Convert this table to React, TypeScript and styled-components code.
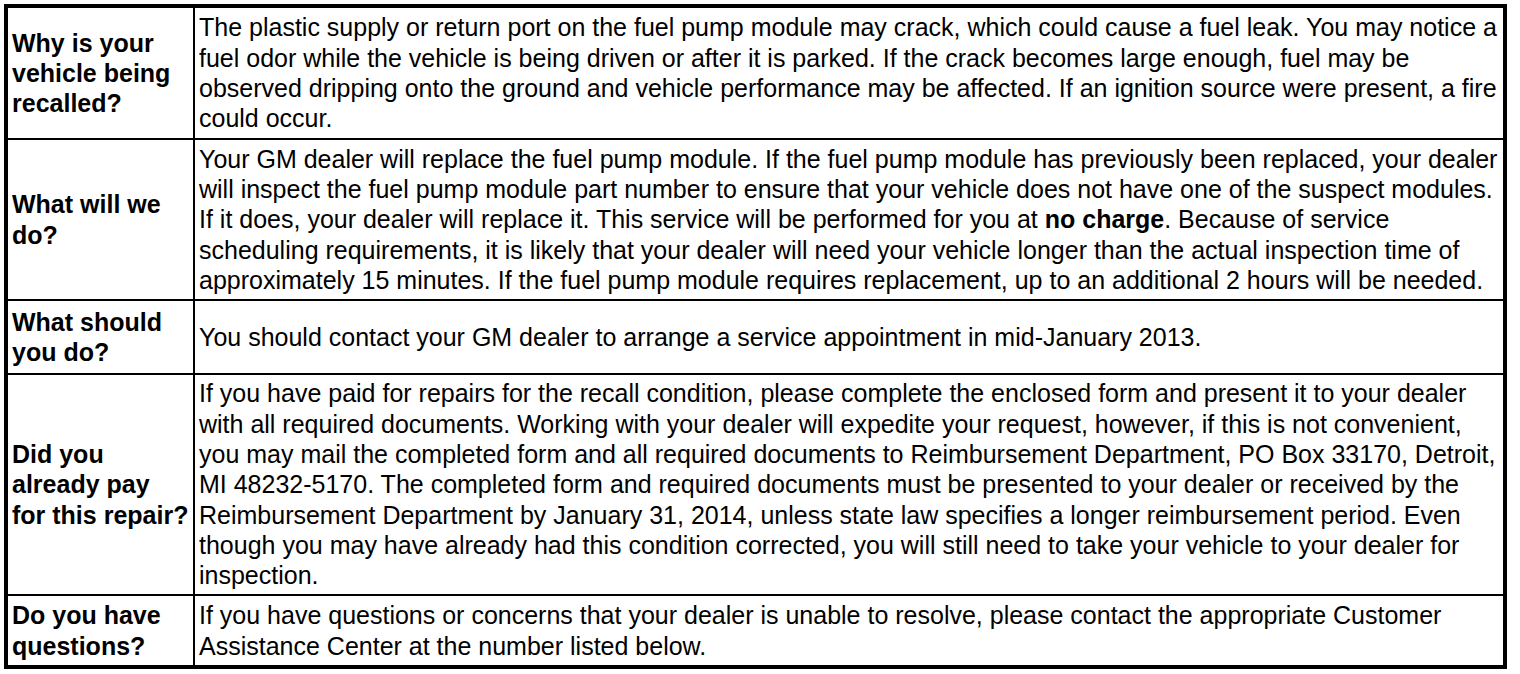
import React from "react";
import styled, { createGlobalStyle } from "styled-components";

const Global = createGlobalStyle`
  html, body { margin: 0; padding: 0; background: #fff; }
  body { font-family: "Liberation Sans", Arial, Helvetica, sans-serif; color: #000; }
`;

const Page = styled.div`
  padding: 4px;
`;

const Frame = styled.div`
  width: 1495px;
  border: 4px solid #000;
  background: #000;
  display: grid;
  grid-template-columns: 185px 1308px;
  grid-template-rows: 130px 159px 72px 219px 69px;
  gap: 2px;
`;

const Cell = styled.div<{ $label?: boolean }>`
  background: #fff;
  display: flex;
  flex-direction: column;
  justify-content: center;
  padding-left: 4px;
  font-size: 25px;
  line-height: 30.3px;
  font-weight: ${(p) => (p.$label ? 700 : 400)};
  overflow: hidden;
`;

const Line = styled.span`
  display: block;
  white-space: nowrap;
`;

type Row = { label: string[]; body: React.ReactNode[] };

const rows: Row[] = [
  {
    label: ["Why is your", "vehicle being", "recalled?"],
    body: [
      "The plastic supply or return port on the fuel pump module may crack, which could cause a fuel leak. You may notice a",
      "fuel odor while the vehicle is being driven or after it is parked. If the crack becomes large enough, fuel may be",
      "observed dripping onto the ground and vehicle performance may be affected. If an ignition source were present, a fire",
      "could occur.",
    ],
  },
  {
    label: ["What will we", "do?"],
    body: [
      "Your GM dealer will replace the fuel pump module. If the fuel pump module has previously been replaced, your dealer",
      "will inspect the fuel pump module part number to ensure that your vehicle does not have one of the suspect modules.",
      <>
        If it does, your dealer will replace it. This service will be performed for you at <b>no charge</b>. Because of service
      </>,
      "scheduling requirements, it is likely that your dealer will need your vehicle longer than the actual inspection time of",
      "approximately 15 minutes. If the fuel pump module requires replacement, up to an additional 2 hours will be needed.",
    ],
  },
  {
    label: ["What should", "you do?"],
    body: ["You should contact your GM dealer to arrange a service appointment in mid-January 2013."],
  },
  {
    label: ["Did you", "already pay", "for this repair?"],
    body: [
      "If you have paid for repairs for the recall condition, please complete the enclosed form and present it to your dealer",
      "with all required documents. Working with your dealer will expedite your request, however, if this is not convenient,",
      "you may mail the completed form and all required documents to Reimbursement Department, PO Box 33170, Detroit,",
      "MI 48232-5170. The completed form and required documents must be presented to your dealer or received by the",
      "Reimbursement Department by January 31, 2014, unless state law specifies a longer reimbursement period. Even",
      "though you may have already had this condition corrected, you will still need to take your vehicle to your dealer for",
      "inspection.",
    ],
  },
  {
    label: ["Do you have", "questions?"],
    body: [
      "If you have questions or concerns that your dealer is unable to resolve, please contact the appropriate Customer",
      "Assistance Center at the number listed below.",
    ],
  },
];

export default function App() {
  return (
    <Page>
      <Global />
      <Frame>
        {rows.map((r, i) => (
          <React.Fragment key={i}>
            <Cell $label>
              {r.label.map((l, j) => (
                <Line key={j}>{l}</Line>
              ))}
            </Cell>
            <Cell>
              {r.body.map((l, j) => (
                <Line key={j}>{l}</Line>
              ))}
            </Cell>
          </React.Fragment>
        ))}
      </Frame>
    </Page>
  );
}
